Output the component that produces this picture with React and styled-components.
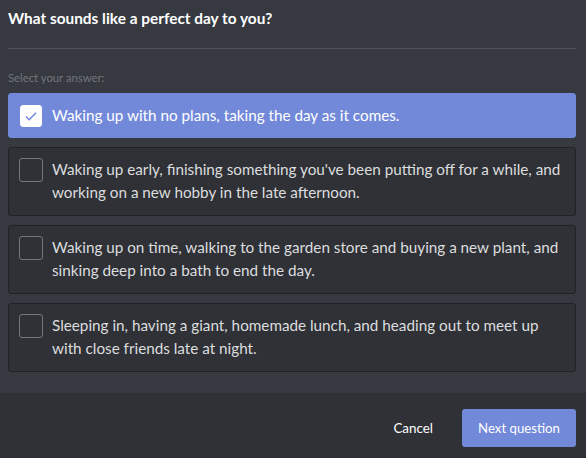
import React, { useState } from 'react';
import styled, { createGlobalStyle } from 'styled-components';

const GlobalStyle = createGlobalStyle`
  html, body {
    margin: 0;
    padding: 0;
    background: #36393f;
  }
  * { box-sizing: border-box; }
`;

const Modal = styled.div`
  width: 586px;
  height: 458px;
  background: #36393f;
  display: flex;
  flex-direction: column;
  font-family: Lato, "Noto Sans", sans-serif;
  overflow: hidden;
`;

const Body = styled.div`
  flex: 1;
  padding: 8px 10px 0 8px;
  display: flex;
  flex-direction: column;
`;

const Title = styled.h2`
  margin: 0;
  font-size: 15.4px;
  line-height: 20px;
  font-weight: 700;
  color: #ffffff;
  padding-bottom: 20px;
  border-bottom: 1px solid #4f545c;
`;

const Label = styled.div`
  margin-top: 22px;
  font-size: 11.3px;
  line-height: 14px;
  color: #72767d;
`;

const Options = styled.div`
  margin-top: 8px;
  display: flex;
  flex-direction: column;
  gap: 9px;
`;

const Option = styled.div`
  display: flex;
  align-items: ${(p) => (p.selected ? 'center' : 'flex-start')};
  gap: 9px;
  padding: ${(p) => (p.selected ? '10px 6px 10px 11px' : '10px 6px 11px 10px')};
  min-height: 45px;
  border-radius: 3px;
  border: 1px solid ${(p) => (p.selected ? '#7289da' : '#202225')};
  background: ${(p) => (p.selected ? '#7289da' : '#2f3136')};
  cursor: pointer;
`;

const Box = styled.div`
  flex: none;
  width: ${(p) => (p.checked ? '22px' : '24px')};
  height: ${(p) => (p.checked ? '22px' : '24px')};
  margin-right: ${(p) => (p.checked ? '1px' : '0')};
  border-radius: 3px;
  border: 1px solid ${(p) => (p.checked ? '#ffffff' : '#72767d')};
  background: ${(p) => (p.checked ? '#ffffff' : 'transparent')};
  display: flex;
  align-items: center;
  justify-content: center;
`;

const OptionText = styled.div`
  font-size: 15.25px;
  line-height: 23px;
  color: ${(p) => (p.selected ? '#ffffff' : '#dcddde')};
`;

const Footer = styled.div`
  height: 65px;
  background: #2f3136;
  display: flex;
  align-items: flex-start;
  justify-content: flex-end;
  padding: 16px 10px 0 16px;
  gap: 9px;
`;

const TextButton = styled.button`
  border: none;
  background: transparent;
  color: #ffffff;
  font-family: inherit;
  font-size: 13.4px;
  height: 38px;
  padding: 0 20px;
  cursor: pointer;
`;

const PrimaryButton = styled.button`
  border: none;
  border-radius: 3px;
  background: #7289da;
  color: #ffffff;
  font-family: inherit;
  font-size: 13.2px;
  width: 114px;
  height: 38px;
  cursor: pointer;
`;

const answers = [
  'Waking up with no plans, taking the day as it comes.',
  "Waking up early, finishing something you've been putting off for a while, and working on a new hobby in the late afternoon.",
  'Waking up on time, walking to the garden store and buying a new plant, and sinking deep into a bath to end the day.',
  'Sleeping in, having a giant, homemade lunch, and heading out to meet up with close friends late at night.',
];

function Check() {
  return (
    <svg width="16" height="16" viewBox="0 0 16 16" fill="none">
      <path d="M3 8.5l3.2 3.2L13 4.8" stroke="#7289da" strokeWidth="1.5" />
    </svg>
  );
}

export default function App() {
  const [picked, setPicked] = useState(0);
  return (
    <Modal>
      <GlobalStyle />
      <Body>
        <Title>What sounds like a perfect day to you?</Title>
        <Label>Select your answer:</Label>
        <Options>
          {answers.map((a, i) => (
            <Option key={i} selected={picked === i} onClick={() => setPicked(i)}>
              <Box checked={picked === i}>{picked === i && <Check />}</Box>
              <OptionText selected={picked === i}>{a}</OptionText>
            </Option>
          ))}
        </Options>
      </Body>
      <Footer>
        <TextButton>Cancel</TextButton>
        <PrimaryButton>Next question</PrimaryButton>
      </Footer>
    </Modal>
  );
}
